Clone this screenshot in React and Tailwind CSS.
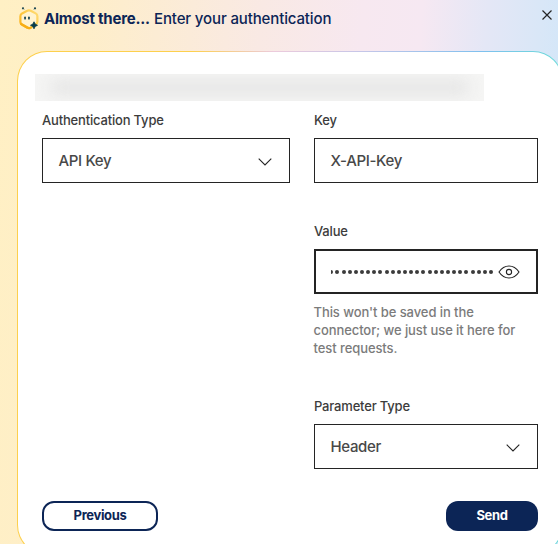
import React from 'react';

function Mascot() {
  return (
    <svg width="24" height="26" viewBox="0 0 24 26" className="shrink-0" fill="none">
      <defs>
        <linearGradient id="hex" x1="3" y1="20" x2="21" y2="6" gradientUnits="userSpaceOnUse">
          <stop stopColor="#fbb31d" />
          <stop offset="0.5" stopColor="#fcc944" />
          <stop offset="1" stopColor="#ffdc78" />
        </linearGradient>
      </defs>
      <path d="M10.2 4.8Q12 3.8 13.8 4.8L18.7 7.4Q20.4 8.4 20.4 10.2V15.5Q20.4 17.3 18.7 18.3L13.8 21.6Q12 22.6 10.2 21.6L5.1 18.8Q3.4 17.8 3.4 16V10.2Q3.4 8.4 5.1 7.4Z" fill="#fff3d0" stroke="url(#hex)" strokeWidth="2.2" />
      <path d="M4.2 18L10.4 21.6Q12 22.6 13.6 21.7" stroke="#f8ae14" strokeWidth="2.4" strokeLinecap="round" />
      <circle cx="6" cy="2.3" r="1.1" fill="#12404d" />
      <path d="M6.6 2.8L7.6 3.8M17.4 2.8L16.4 3.8" stroke="#b9bd97" />
      <circle cx="18" cy="2.3" r="1.1" fill="#12404d" />
      <rect x="7.2" y="10.4" width="1.7" height="3.2" rx=".85" fill="#12404d" />
      <rect x="11.1" y="10.4" width="1.7" height="3.2" rx=".85" fill="#12404d" />
      <path d="M17 15.8Q17.6 18.7 20.5 19.3Q17.6 19.9 17 22.8Q16.4 19.9 13.5 19.3Q16.4 18.7 17 15.8Z" fill="#063b4a" stroke="#063b4a" strokeWidth=".8" />
    </svg>
  );
}

function Chevron() {
  return (
    <svg width="14" height="8" viewBox="0 0 14 8" fill="none" className="mt-px shrink-0">
      <path d="M.7.7L7 7L13.3.7" stroke="#242424" strokeWidth="1.1" />
    </svg>
  );
}

function Eye() {
  return (
    <svg width="22" height="14" viewBox="0 0 22 14" fill="none" stroke="#242424" strokeWidth="1.1" className="shrink-0">
      <path d="M1 7Q5 1 11 1T21 7Q17 13 11 13T1 7Z" />
      <circle cx="11" cy="7" r="2.6" />
    </svg>
  );
}

function Label({ children }) {
  return <div className="h-[18px] whitespace-nowrap text-[13px] leading-[18px] font-medium tracking-[-0.18px] text-[#3c3c3c]">{children}</div>;
}

function Box({ children }) {
  return (
    <div className="mt-[9px] flex h-[45px] items-center justify-between border border-[#242424] bg-white pt-0.5 pr-[17px] pl-[15.5px] text-[15px] font-medium tracking-[-0.35px] text-[#484848]">
      {children}
    </div>
  );
}

export default function App() {
  return (
    <div className="h-[544px] w-[558px] overflow-hidden bg-[linear-gradient(94deg,#fff0c4_0%,#feeec9_15%,#f9e9e4_44%,#f7e8f0_61%,#f6e8f2_71%,#e4e7f6_82%,#d9e7f7_91%,#d1e6f9_97%)] font-['Inter',sans-serif]">
      <header className="flex h-[51px] items-start justify-between pt-[6px] pr-[5px] pl-[17px]">
        <div className="flex items-start">
          <Mascot />
          <div className="ml-[3px] flex whitespace-nowrap text-[15px] leading-[26px] text-[#0c2556]">
            <span className="w-[110px] font-bold tracking-[-0.22px]">Almost there...</span>
            <span className="font-medium tracking-[-0.13px]">Enter your authentication</span>
          </div>
        </div>
        <svg width="12" height="12" viewBox="0 0 12 12" className="mt-[3px]" fill="none">
          <path d="M1.5 1.5L10.5 10.5M10.5 1.5L1.5 10.5" stroke="#242424" strokeWidth="1.2" />
        </svg>
      </header>

      <main className="ml-[17px] h-[504px] w-[546px] rounded-[30px] bg-[linear-gradient(90deg,#fdd04d_0%,#fdd04d_32%,#eccbdc_47%,#c6c6e8_63%,#7fc0ee_85%,#6bdcd8_100%)] p-px">
        <div className="h-full rounded-[29px] bg-white pt-[22px] pl-[17px]">
          <div className="h-[27px] w-[449px] overflow-hidden bg-[#f5f5f4]">
            <div className="h-full px-4 py-[8px] blur-[8px]">
              <div className="h-full bg-[#e0e0e0]" />
            </div>
          </div>
          <div className="ml-[7px] flex w-[496px] gap-6 pt-[10px]">
            <section className="w-[248px]">
              <Label>Authentication Type</Label>
              <Box><span>API Key</span><Chevron /></Box>
            </section>
            <section className="w-[224px]">
              <Label>Key</Label>
              <Box><span>X-API-Key</span></Box>
              <div className="pt-[39px]">
                <Label>Value</Label>
                <div className="mt-[9px] flex h-[45px] items-center border-2 border-[#242424] pl-[15px]">
                  <div className="flex h-[5px] w-[162px] items-center justify-end gap-[2.15px] overflow-hidden">
                    {Array.from({ length: 27 }, (_, i) => (
                      <i key={i} className="size-[4px] shrink-0 rounded-full bg-[#3b3b3b]" />
                    ))}
                  </div>
                  <div className="ml-[5px]"><Eye /></div>
                </div>
              </div>
              <p className="mt-[9px] -ml-[0.5px] whitespace-nowrap text-[13px] leading-[18px] font-medium tracking-[-0.08px] text-[#7b7b7b]">
                This won't be saved in the<br />connector; we just use it here for<br />test requests.
              </p>
              <div className="pt-[40px]">
                <Label>Parameter Type</Label>
                <Box><span>Header</span><Chevron /></Box>
              </div>
            </section>
          </div>
          <footer className="mt-8 ml-[7px] flex w-[496px] justify-between text-[13px] font-bold tracking-[-0.35px]">
            <button className="h-[30px] w-[116px] rounded-[12px] border-2 border-[#0c2556] bg-white text-[#0c2556]">Previous</button>
            <button className="h-[30px] w-[92px] rounded-[12px] bg-[#0c2556] text-white">Send</button>
          </footer>
        </div>
      </main>
    </div>
  );
}
